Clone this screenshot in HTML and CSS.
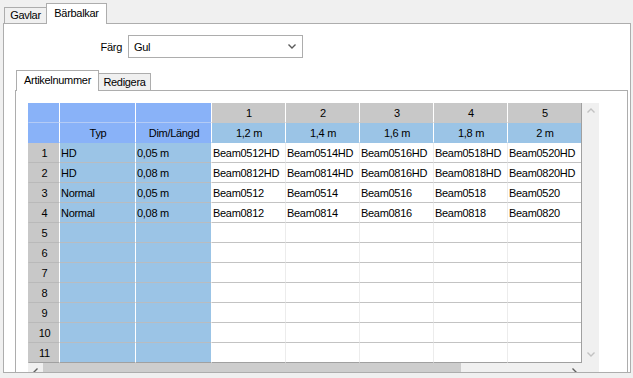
FILE: index.html
```html
<!DOCTYPE HTML>
<html>
<head>
<title>Bärbalkar</title>
<link rel="stylesheet" href="styles.css">
</head>
<body>
<div class="tabbar tabbar-outer">
  <div class="tab tab-gavlar">Gavlar</div>
  <div class="tab tab-active tab-barbalkar">Bärbalkar</div>
</div>
<div class="panel-outer">
  <div class="field">
    <label class="field-label">Färg</label>
    <div class="combo">
      <span>Gul</span>
      <svg width="8" height="5" viewBox="0 0 8 5"><path d="M0.5 0.5 L4 4 L7.5 0.5" fill="none" stroke="#5a5a5a" stroke-width="1.4"/></svg>
    </div>
  </div>
  <div class="tabbar tabbar-inner">
    <div class="tab tab-active tab-artikel">Artikelnummer</div>
    <div class="tab tab-redigera">Redigera</div>
  </div>
  <div class="panel-inner">
    <div class="scrollview">
      <div class="grid">
        <!-- header row 1 -->
        <div class="c hb first"></div><div class="c hb"></div><div class="c hb"></div>
        <div class="c hg">1</div><div class="c hg">2</div><div class="c hg">3</div><div class="c hg">4</div><div class="c hg">5</div>
        <!-- header row 2 -->
        <div class="c hb2 first"></div><div class="c hb2">Typ</div><div class="c hb2">Dim/Längd</div>
        <div class="c hl">1,2 m</div><div class="c hl">1,4 m</div><div class="c hl">1,6 m</div><div class="c hl">1,8 m</div><div class="c hl">2 m</div>
        <!-- data -->
        <div class="c rh">1</div><div class="c bl">HD</div><div class="c bl">0,05 m</div>
        <div class="c w">Beam0512HD</div><div class="c w">Beam0514HD</div><div class="c w">Beam0516HD</div><div class="c w">Beam0518HD</div><div class="c w">Beam0520HD</div>
        <div class="c rh">2</div><div class="c bl">HD</div><div class="c bl">0,08 m</div>
        <div class="c w">Beam0812HD</div><div class="c w">Beam0814HD</div><div class="c w">Beam0816HD</div><div class="c w">Beam0818HD</div><div class="c w">Beam0820HD</div>
        <div class="c rh">3</div><div class="c bl">Normal</div><div class="c bl">0,05 m</div>
        <div class="c w">Beam0512</div><div class="c w">Beam0514</div><div class="c w">Beam0516</div><div class="c w">Beam0518</div><div class="c w">Beam0520</div>
        <div class="c rh">4</div><div class="c bl">Normal</div><div class="c bl">0,08 m</div>
        <div class="c w">Beam0812</div><div class="c w">Beam0814</div><div class="c w">Beam0816</div><div class="c w">Beam0818</div><div class="c w">Beam0820</div>
        <div class="c rh">5</div><div class="c bl"></div><div class="c bl"></div>
        <div class="c w"></div><div class="c w"></div><div class="c w"></div><div class="c w"></div><div class="c w"></div>
        <div class="c rh">6</div><div class="c bl"></div><div class="c bl"></div>
        <div class="c w"></div><div class="c w"></div><div class="c w"></div><div class="c w"></div><div class="c w"></div>
        <div class="c rh">7</div><div class="c bl"></div><div class="c bl"></div>
        <div class="c w"></div><div class="c w"></div><div class="c w"></div><div class="c w"></div><div class="c w"></div>
        <div class="c rh">8</div><div class="c bl"></div><div class="c bl"></div>
        <div class="c w"></div><div class="c w"></div><div class="c w"></div><div class="c w"></div><div class="c w"></div>
        <div class="c rh">9</div><div class="c bl"></div><div class="c bl"></div>
        <div class="c w"></div><div class="c w"></div><div class="c w"></div><div class="c w"></div><div class="c w"></div>
        <div class="c rh">10</div><div class="c bl"></div><div class="c bl"></div>
        <div class="c w"></div><div class="c w"></div><div class="c w"></div><div class="c w"></div><div class="c w"></div>
        <div class="c rh last">11</div><div class="c bl last"></div><div class="c bl last"></div>
        <div class="c w last"></div><div class="c w last"></div><div class="c w last"></div><div class="c w last"></div><div class="c w last"></div>
      </div>
      <div class="vscroll">
        <svg width="8" height="5" viewBox="0 0 8 5"><path d="M0.5 4.5 L4 1 L7.5 4.5" fill="none" stroke="#c2c2c2" stroke-width="1.4"/></svg>
        <svg width="8" height="5" viewBox="0 0 8 5"><path d="M0.5 0.5 L4 4 L7.5 0.5" fill="none" stroke="#c2c2c2" stroke-width="1.4"/></svg>
      </div>
      <div class="hscroll">
        <svg class="arrow-left" width="5" height="8" viewBox="0 0 5 8"><path d="M4.5 0.5 L1 4 L4.5 7.5" fill="none" stroke="#606060" stroke-width="1.4"/></svg>
        <div class="thumb"></div>
        <svg class="arrow-right" width="5" height="8" viewBox="0 0 5 8"><path d="M0.5 0.5 L4 4 L0.5 7.5" fill="none" stroke="#606060" stroke-width="1.4"/></svg>
      </div>
      <div class="corner"></div>
    </div>
  </div>
</div>
</body>
</html>
```

FILE: styles.css
```css
body {margin: 0; width: 633px; height: 378px; overflow: hidden; background: #f0f0f0;
      font: 11px "Liberation Sans", Arial, sans-serif; letter-spacing: -0.3px; color: #000;}

/* tabs */
.tabbar          {display: flex; align-items: flex-end;}
.tabbar-outer    {height: 23px; padding-left: 4px;}
.tabbar-inner    {height: 20px; margin-top: 12px; padding-left: 12px;}
.tab             {box-sizing: border-box; border: 1px solid #adadad; border-bottom: none;
                  background: #f0f0f0; text-align: center;}
.tab + .tab      {margin-left: -1px;}
.tab-active      {background: #fff; margin-bottom: -1px; position: relative; z-index: 1;}
.tab-gavlar      {width: 43px; height: 16px; line-height: 15px;}
.tab-barbalkar   {width: 61px; height: 21px; line-height: 18px;}
.tab-artikel     {width: 83px; height: 21px; line-height: 18px;}
.tab-redigera    {width: 53px; height: 17px; line-height: 16px;}

/* panels */
.panel-outer     {box-sizing: border-box; margin-left: 3px; width: 628px; height: 350px;
                  border: 1px solid #adadad; background: #fff; overflow: hidden;}
.panel-inner     {box-sizing: border-box; margin-left: 11px; width: 613px; height: 320px;
                  border: 1px solid #adadad; background: #fff;}

/* colour field */
.field           {display: flex; align-items: center; margin-top: 11px;}
.field-label     {width: 118px; margin-right: 6px; text-align: right;}
.combo           {box-sizing: border-box; width: 175px; height: 23px; border: 1px solid #adadad;
                  display: flex; align-items: center; justify-content: space-between;
                  padding: 0 6px 0 5px; background: #fff;}

/* grid with scrollbars */
.scrollview      {margin: 12px 0 0 12px; display: grid;
                  grid-template-columns: 554px 17px; grid-template-rows: 260px 17px;}
.grid            {display: grid; grid-template-columns: 31px 76px 76px repeat(5, 74px);
                  grid-auto-rows: 20px; border-right: 1px solid #a0a0a0; background: #fff;}
.c               {box-sizing: border-box; border-left: 1px solid #fff; border-bottom: 1px solid #c3c3c3;
                  padding: 2px 0 0 1px; line-height: 17px; white-space: nowrap; overflow: hidden;}
.hb              {background: #89b2f8; border-bottom-color: #b4cbf5; text-align: center;}
.hb2             {background: #89b2f8; border-bottom-color: #89b2f8; text-align: center;}
.hg              {background: #c8c8c8; border-bottom-color: #c8c8c8; text-align: center;}
.hl              {background: #9bc4e6; border-bottom-color: #9bc4e6; text-align: center;}
.rh              {background: #c8c8c8; border-left-color: #c8c8c8; border-bottom-color: #b9b9b9; text-align: center;}
.first           {border-left-color: #89b2f8;}
.bl              {background: #9bc4e6; border-bottom-color: #b9bcc0;}
.w               {border-left-color: #ececec;}
.bl + .w         {border-left-color: #fff;}
.last            {border-bottom-color: #a0a0a0;}

.vscroll         {background: #f0f0f0; display: flex; flex-direction: column; align-items: center;
                  justify-content: space-between; padding: 5px 0 6px; box-sizing: border-box;}
.hscroll         {background: #f0f0f0; display: flex; align-items: center;}
.arrow-left      {margin-left: 5px;}
.thumb           {align-self: stretch; width: 418px; margin-left: 5px; background: #cdcdcd;}
.arrow-right     {margin-left: auto; margin-right: 5px;}
.corner          {background: #f0f0f0;}
```
